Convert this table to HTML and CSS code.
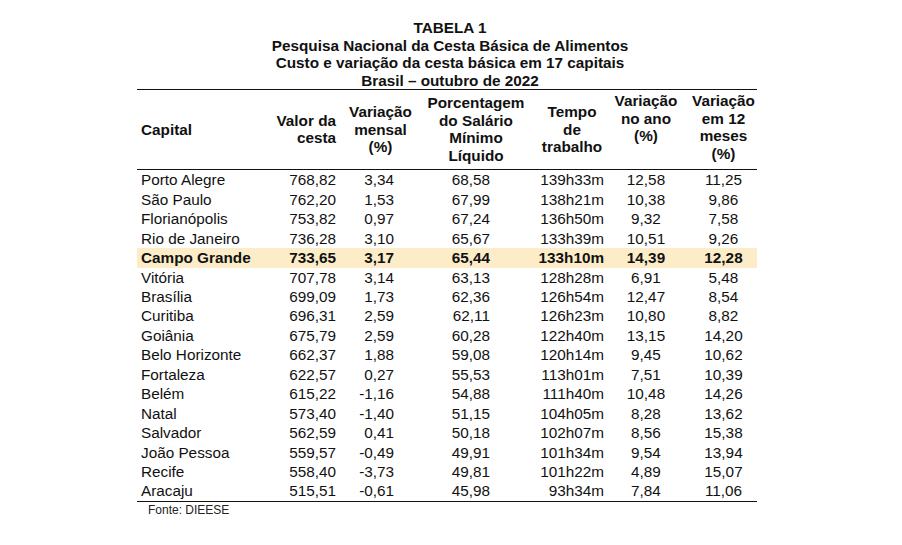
FILE: index.html
```html
<!DOCTYPE html>
<html lang="pt-BR">
<head>
<meta charset="utf-8">
<title>Tabela 1 - Cesta Básica</title>
<link rel="stylesheet" href="styles.css">
</head>
<body>
<div class="wrap">
  <div class="title">
    <div>TABELA 1</div>
    <div>Pesquisa Nacional da Cesta Básica de Alimentos</div>
    <div>Custo e variação da cesta básica em 17 capitais</div>
    <div>Brasil – outubro de 2022</div>
  </div>
  <table class="tbl">
    <colgroup>
      <col class="c1"><col class="c2"><col class="c3"><col class="c4"><col class="c5"><col class="c6"><col class="c7">
    </colgroup>
    <thead>
      <tr>
        <th class="h1">Capital</th>
        <th class="h2">Valor da<br>cesta</th>
        <th class="h3">Variação<br>mensal<br>(%)</th>
        <th class="h4">Porcentagem<br>do Salário<br>Mínimo<br>Líquido</th>
        <th class="h5">Tempo<br>de<br>trabalho</th>
        <th class="h6">Variação<br>no ano<br>(%)</th>
        <th class="h7">Variação<br>em 12<br>meses<br>(%)</th>
      </tr>
    </thead>
    <tbody>
      <tr><td>Porto Alegre</td><td>768,82</td><td>3,34</td><td>68,58</td><td>139h33m</td><td>12,58</td><td>11,25</td></tr>
      <tr><td>São Paulo</td><td>762,20</td><td>1,53</td><td>67,99</td><td>138h21m</td><td>10,38</td><td>9,86</td></tr>
      <tr><td>Florianópolis</td><td>753,82</td><td>0,97</td><td>67,24</td><td>136h50m</td><td>9,32</td><td>7,58</td></tr>
      <tr><td>Rio de Janeiro</td><td>736,28</td><td>3,10</td><td>65,67</td><td>133h39m</td><td>10,51</td><td>9,26</td></tr>
      <tr class="hl"><td>Campo Grande</td><td>733,65</td><td>3,17</td><td>65,44</td><td>133h10m</td><td>14,39</td><td>12,28</td></tr>
      <tr><td>Vitória</td><td>707,78</td><td>3,14</td><td>63,13</td><td>128h28m</td><td>6,91</td><td>5,48</td></tr>
      <tr><td>Brasília</td><td>699,09</td><td>1,73</td><td>62,36</td><td>126h54m</td><td>12,47</td><td>8,54</td></tr>
      <tr><td>Curitiba</td><td>696,31</td><td>2,59</td><td>62,11</td><td>126h23m</td><td>10,80</td><td>8,82</td></tr>
      <tr><td>Goiânia</td><td>675,79</td><td>2,59</td><td>60,28</td><td>122h40m</td><td>13,15</td><td>14,20</td></tr>
      <tr><td>Belo Horizonte</td><td>662,37</td><td>1,88</td><td>59,08</td><td>120h14m</td><td>9,45</td><td>10,62</td></tr>
      <tr><td>Fortaleza</td><td>622,57</td><td>0,27</td><td>55,53</td><td>113h01m</td><td>7,51</td><td>10,39</td></tr>
      <tr><td>Belém</td><td>615,22</td><td>-1,16</td><td>54,88</td><td>111h40m</td><td>10,48</td><td>14,26</td></tr>
      <tr><td>Natal</td><td>573,40</td><td>-1,40</td><td>51,15</td><td>104h05m</td><td>8,28</td><td>13,62</td></tr>
      <tr><td>Salvador</td><td>562,59</td><td>0,41</td><td>50,18</td><td>102h07m</td><td>8,56</td><td>15,38</td></tr>
      <tr><td>João Pessoa</td><td>559,57</td><td>-0,49</td><td>49,91</td><td>101h34m</td><td>9,54</td><td>13,94</td></tr>
      <tr><td>Recife</td><td>558,40</td><td>-3,73</td><td>49,81</td><td>101h22m</td><td>4,89</td><td>15,07</td></tr>
      <tr><td>Aracaju</td><td>515,51</td><td>-0,61</td><td>45,98</td><td>93h34m</td><td>7,84</td><td>11,06</td></tr>
    </tbody>
  </table>
  <div class="source">Fonte: DIEESE</div>
</div>
</body>
</html>
```

FILE: styles.css
```css
html, body {
  margin: 0;
  padding: 0;
  background: #ffffff;
}
body {
  font-family: "Liberation Sans", Arial, sans-serif;
  color: #111111;
  width: 902px;
  height: 545px;
  overflow: hidden;
}
.wrap {
  width: 620px;
  margin-left: 137px;
  padding-top: 19px;
}
.title {
  text-align: center;
  font-weight: bold;
  font-size: 15.3px;
  line-height: 17.6px;
  margin-left: 6px;
}
.tbl {
  width: 620px;
  border-collapse: collapse;
  table-layout: fixed;
  font-size: 15.3px;
  border-top: 1.5px solid #111;
  border-bottom: 1.5px solid #111;
}
.c1 { width: 124px; }
.c2 { width: 80px; }
.c3 { width: 79px; }
.c4 { width: 112px; }
.c5 { width: 80px; }
.c6 { width: 68px; }
.c7 { width: 77px; }
.tbl thead th {
  font-weight: bold;
  line-height: 17.5px;
  padding: 4px 0 5px 0;
  vertical-align: middle;
  text-align: center;
  border-bottom: 1.5px solid #111;
  height: 70px;
}
.tbl thead .h1 { text-align: left; padding-left: 4px; }
.tbl thead .h2 { text-align: right; padding-right: 5px; }
.tbl thead .h6 { vertical-align: top; padding-top: 2px; }
.tbl thead .h7 { vertical-align: top; padding-top: 2px; padding-left: 10px; }
.tbl tbody td {
  padding: 0;
  height: 19.44px;
  line-height: 19.44px;
  white-space: nowrap;
}
.tbl tbody td:nth-child(1) { text-align: left; padding-left: 4px; }
.tbl tbody td:nth-child(2) { text-align: right; padding-right: 5px; }
.tbl tbody td:nth-child(3) { text-align: right; padding-right: 26px; }
.tbl tbody td:nth-child(4) { text-align: right; padding-right: 42px; }
.tbl tbody td:nth-child(5) { text-align: right; padding-right: 8px; }
.tbl tbody td:nth-child(6) { text-align: center; }
.tbl tbody td:nth-child(7) { text-align: center; padding-left: 10px; }
.tbl tbody tr.hl td {
  background: #fcedc8;
  font-weight: bold;
}
.source {
  font-size: 12px;
  line-height: 14px;
  padding-left: 11px;
  padding-top: 1px;
  color: #222;
}
```
